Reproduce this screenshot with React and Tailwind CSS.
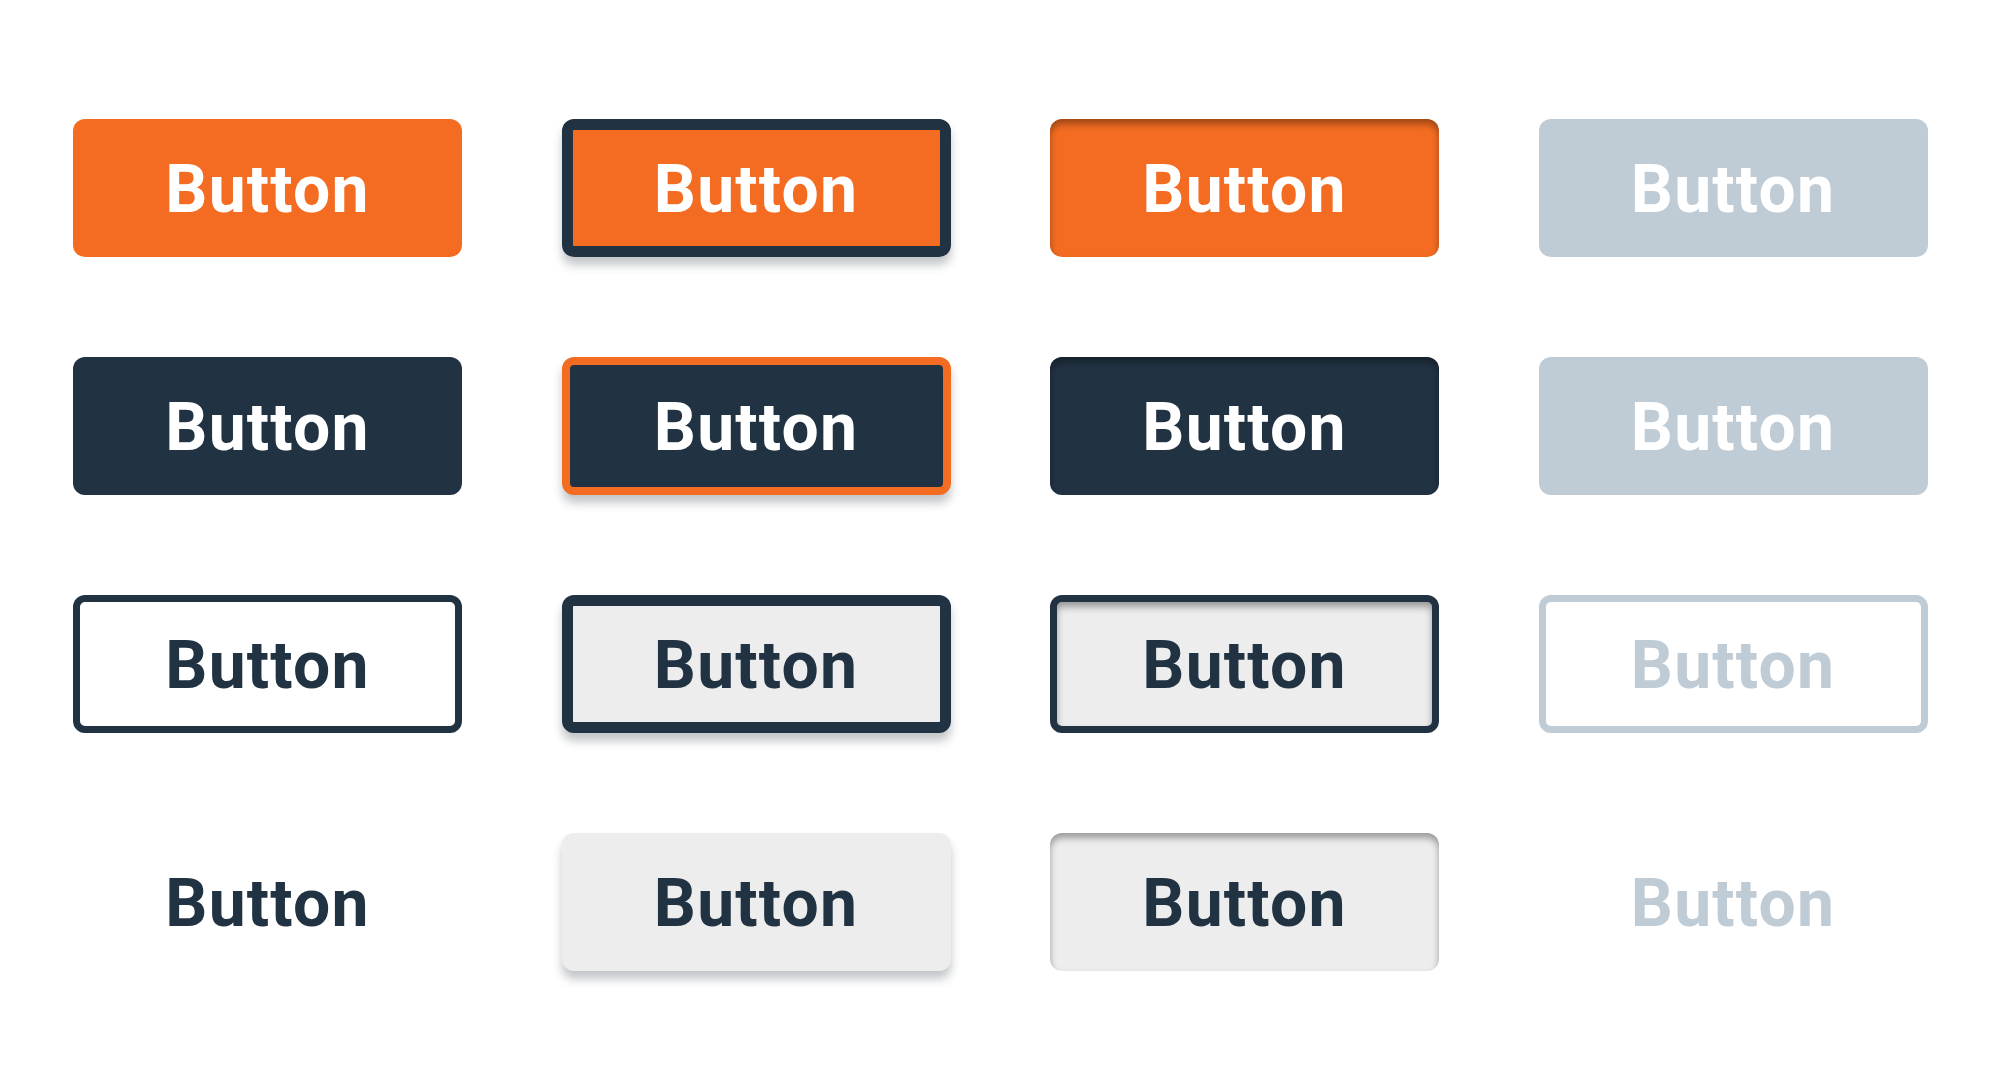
export default function App() {
  const base =
    "flex items-center justify-center h-[138px] w-[389px] rounded-[12px] text-[66px] tracking-[1.2px] font-bold leading-none";
  const font = { fontFamily: "Roboto, 'Liberation Sans', sans-serif" };
  const lift = "shadow-[0_8px_10px_rgba(40,50,60,0.28)]";
  const sunk = "shadow-[inset_0_5px_7px_rgba(0,0,0,0.35)]";
  const buttons = [
    // row 1
    `${base} bg-[#f36c21] text-white`,
    `${base} bg-[#f36c21] text-white border-[11px] border-[#213243] ${lift}`,
    `${base} bg-[#f36c21] text-white ${sunk}`,
    `${base} bg-[#bfcbd5] text-white`,
    // row 2
    `${base} bg-[#213243] text-white`,
    `${base} bg-[#213243] text-white border-[8px] border-[#f36c21] ${lift}`,
    `${base} bg-[#213243] text-white ${sunk}`,
    `${base} bg-[#bfcbd5] text-white`,
    // row 3
    `${base} bg-white text-[#213243] border-[7px] border-[#213243]`,
    `${base} bg-[#ededed] text-[#213243] border-[11px] border-[#213243] ${lift}`,
    `${base} bg-[#ededed] text-[#213243] border-[7px] border-[#213243] ${sunk}`,
    `${base} bg-white text-[#bfcbd5] border-[7px] border-[#bfcbd5]`,
    // row 4
    `${base} bg-white text-[#213243]`,
    `${base} bg-[#ededed] text-[#213243] ${lift}`,
    `${base} bg-[#ededed] text-[#213243] ${sunk}`,
    `${base} bg-white text-[#bfcbd5]`,
  ];
  return (
    <div className="w-[2000px] h-[1090px] bg-white" style={font}>
      <div className="grid grid-cols-[repeat(4,389px)] gap-x-[99.5px] gap-y-[100px] pl-[73px] pt-[119px]">
        {buttons.map((c, i) => (
          <div key={i} className={c}>
            <span className="pt-[3px]">Button</span>
          </div>
        ))}
      </div>
    </div>
  );
}
